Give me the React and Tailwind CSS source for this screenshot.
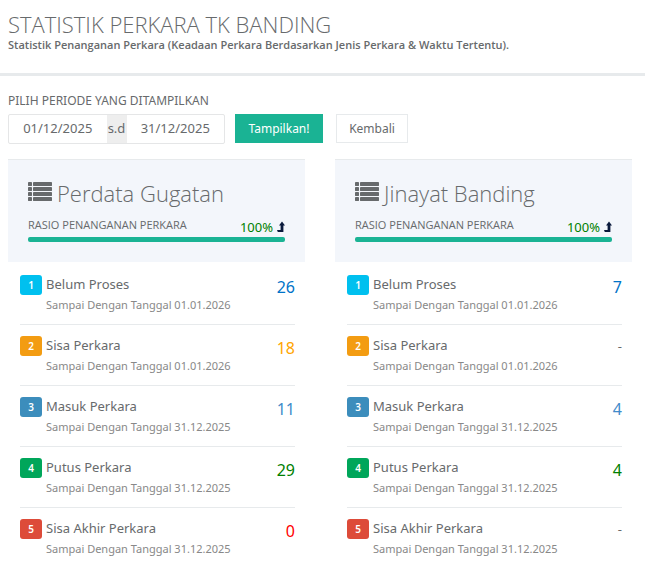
import React from 'react';

const awal = 'Sampai Dengan Tanggal 01.01.2026';
const akhir = 'Sampai Dengan Tanggal 31.12.2025';

const rows = [
  { label: 'Belum Proses', note: awal, badge: 'bg-[#00c0ef]', color: 'text-[#0073c8]' },
  { label: 'Sisa Perkara', note: awal, badge: 'bg-[#f39c12]', color: 'text-[#ffa500]' },
  { label: 'Masuk Perkara', note: akhir, badge: 'bg-[#3c8dbc]', color: 'text-[#428bca]' },
  { label: 'Putus Perkara', note: akhir, badge: 'bg-[#00a65a]', color: 'text-[#008000]' },
  { label: 'Sisa Akhir Perkara', note: akhir, badge: 'bg-[#dd4b39]', color: 'text-[#ff0000]' },
];

const panels = [
  { title: 'Perdata Gugatan', ratio: 100, values: [26, 18, 11, 29, 0] },
  { title: 'Jinayat Banding', ratio: 100, values: [7, null, 4, 4, null] },
];

function ListIcon() {
  return (
    <svg className="mb-[3px] h-[19px] w-6 shrink-0" viewBox="0 0 24 19" fill="currentColor" aria-hidden="true">
      {[0, 5, 10, 15].map((y) => (
        <g key={y}>
          <rect x="0" y={y} width="4" height="4" rx="0.4" />
          <rect x="5" y={y} width="19" height="4" rx="0.4" />
        </g>
      ))}
    </svg>
  );
}

function LevelUpIcon() {
  return (
    <svg className="h-3 w-2" viewBox="0 0 8 12" fill="#0a1a3c" aria-hidden="true">
      <path d="M5 0.5 L8 4.5 H6.4 V11 H0.8 L0 9 H3.6 V4.5 H2 Z" />
    </svg>
  );
}

function Panel({ title, ratio, values }) {
  return (
    <section className="min-w-0">
      <header className="border-t border-[#e7eaec] bg-[#f3f6fb] px-5 pt-4 pb-5">
        <h2 className="flex items-center gap-[5px] font-['Open_Sans',sans-serif] text-[22px] leading-[34px] font-light">
          <ListIcon />
          {title}
        </h2>
        <div className="flex items-end justify-between">
          <span className="font-['Open_Sans',sans-serif] text-[11px] leading-[30px]">
            RASIO PENANGANAN PERKARA
          </span>
          <span className="flex items-center gap-1 text-[13px] leading-[26px] text-[#008000]">
            {ratio}% <LevelUpIcon />
          </span>
        </div>
        <div className="-mt-[3px] h-[5px] overflow-hidden rounded-xs bg-gray-200">
          <div className="h-full bg-[#1ab394]" style={{ width: `${ratio}%` }} />
        </div>
      </header>
      <ol className="pt-[2px] pr-[10px] pl-3">
        {rows.map((row, i) => (
          <li
            key={row.label}
            className="flex gap-1 border-b border-[#e7eaec] pt-[10px] pb-2 last:border-b-0"
          >
            <span
              className={`mt-px flex h-5 w-[22px] items-center justify-center rounded-[3px] text-[10px] font-semibold text-white ${row.badge}`}
            >
              {i + 1}
            </span>
            <div className="flex-1">
              <div className="text-[13px] leading-5">{row.label}</div>
              <div className="text-[11px] leading-[22px] text-[#888888]">{row.note}</div>
            </div>
            {values[i] === null ? (
              <span className="text-[13px] leading-[22px]">-</span>
            ) : (
              <span className={`text-base leading-[26px] ${row.color}`}>{values[i]}</span>
            )}
          </li>
        ))}
      </ol>
    </section>
  );
}

export default function App() {
  return (
    <main className="bg-white font-['Noto_Sans',sans-serif] text-[#676a6c]">
      <header className="border-b-3 border-[#e7eaec] px-2 pt-3 pb-5">
        <h1 className="font-['Open_Sans',sans-serif] text-[22px] leading-[25px] font-light">
          STATISTIK PERKARA TK BANDING
        </h1>
        <p className="font-['Open_Sans',sans-serif] text-[11px] leading-4 font-semibold">
          Statistik Penanganan Perkara (Keadaan Perkara Berdasarkan Jenis Perkara &amp; Waktu Tertentu).
        </p>
      </header>

      <form className="px-2 pt-[14px]" onSubmit={(e) => e.preventDefault()}>
        <label htmlFor="mulai" className="block pb-[2px] text-xs leading-[22px]">
          PILIH PERIODE YANG DITAMPILKAN
        </label>
        <div className="flex items-start">
          <div className="flex h-[30px] w-[217px] rounded-xs border border-[#e5e6e7] text-[13px]">
            <input
              id="mulai"
              type="text"
              defaultValue="01/12/2025"
              className="w-0 flex-1 text-center outline-none"
            />
            <span className="flex w-5 items-center justify-center bg-[#eeeeee]">s.d</span>
            <input
              type="text"
              aria-label="Sampai tanggal"
              defaultValue="31/12/2025"
              className="w-0 flex-1 text-center outline-none"
            />
          </div>
          <button
            type="submit"
            className="ml-[10px] h-[29px] w-22 bg-[#1ab394] text-xs text-white"
          >
            Tampilkan!
          </button>
          <button
            type="button"
            className="ml-[13px] h-[29px] w-[72px] border border-[#e7eaec] bg-white text-xs"
          >
            Kembali
          </button>
        </div>
      </form>

      <div className="mt-[15px] grid grid-cols-2 gap-[30px] pr-[13px] pl-2">
        {panels.map((panel) => (
          <Panel key={panel.title} {...panel} />
        ))}
      </div>
    </main>
  );
}
